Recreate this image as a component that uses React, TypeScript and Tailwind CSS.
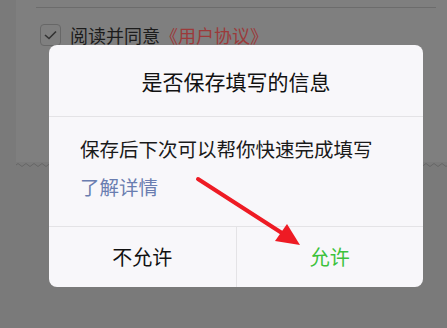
import React from 'react'

const font = { fontFamily: '"Noto Sans CJK SC", "Noto Sans", sans-serif' }

function Wave() {
  // torn-paper style wavy edge at the bottom of the form card
  const bumps = []
  for (let x = 0; x < 440; x += 8) {
    bumps.push(`q2 -3 4 0 q2 3 4 0`)
  }
  return (
    <svg width="431" height="6" className="block">
      <path d={`M0 3 ${bumps.join(' ')}`} fill="none" stroke="#666" strokeWidth="1" />
    </svg>
  )
}

export default function App() {
  return (
    <div className="relative w-[447px] h-[328px] overflow-hidden bg-[#7a7a7a]" style={font}>
      {/* Page behind the overlay */}
      <div className="pl-4">
        <div className="h-[162px] bg-[#7f7f7f] pt-[7px]">
          <div className="ml-5 mr-[11px] h-px bg-[#6c6c6c]" />
          <div className="flex items-center gap-[9px] ml-6 mt-4">
            <div className="shrink-0 w-[21px] h-[22px] rounded-[4px] border border-[#676767] flex items-center justify-center">
              <svg width="13" height="10" viewBox="0 0 13 10">
                <path d="M1 5 L5 8.5 L12 1.5" fill="none" stroke="#333" strokeWidth="1.6" />
              </svg>
            </div>
            <div className="text-[18px] leading-none text-[#1c1c1c]">
              阅读并同意<span className="text-[#9c3a3a]">《用户协议》</span>
            </div>
          </div>
        </div>
        <Wave />
      </div>

      {/* Dialog */}
      <div className="absolute left-[49px] top-[45px] w-[374px] h-[242px] rounded-[8px] bg-[#f8f7fa] flex flex-col overflow-hidden">
        <div className="h-[71px] flex items-center justify-center text-[21px] text-[#111] pt-[3px]">
          是否保存填写的信息
        </div>
        <div className="h-px bg-[#e4e3e6]" />
        <div className="h-[109px] pl-[31px] pt-[19px]">
          <div className="text-[19.5px] leading-[26px] text-[#1a1a1a]">保存后下次可以帮你快速完成填写</div>
          <div className="text-[19.5px] leading-[26px] text-[#6a7db0] mt-[12px]">了解详情</div>
        </div>
        <div className="h-px bg-[#e4e3e6]" />
        <div className="flex-1 flex">
          <div className="flex-1 flex items-center justify-center text-[20px] text-[#111]">不允许</div>
          <div className="w-px bg-[#e4e3e6]" />
          <div className="flex-1 flex items-center justify-center text-[20px] text-[#3cc23c]">允许</div>
        </div>
      </div>

      {/* Red annotation arrow */}
      <svg className="absolute left-0 top-0" width="447" height="328">
        <line x1="198" y1="179" x2="285" y2="235" stroke="#ee1b24" strokeWidth="4" strokeLinecap="round" />
        <polygon points="300,245 275,241 287,224" fill="#ee1b24" />
      </svg>
    </div>
  )
}
